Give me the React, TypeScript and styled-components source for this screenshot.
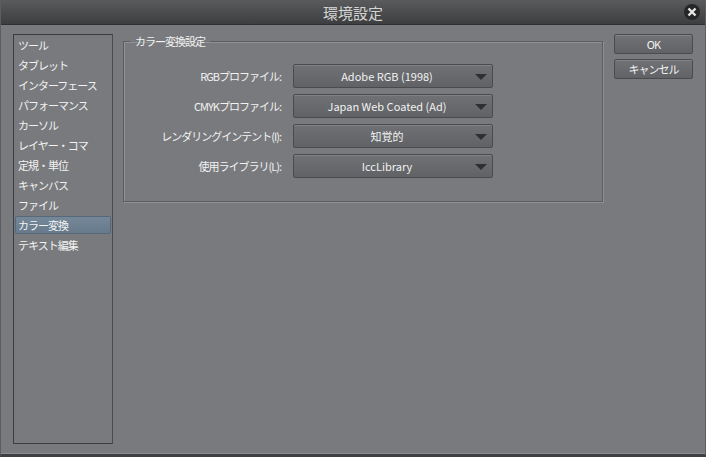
import React from "react";
import styled, { createGlobalStyle } from "styled-components";

const GlobalStyle = createGlobalStyle`
  html, body {
    margin: 0;
    padding: 0;
    background: #77787b;
  }
  body {
    font-family: "Noto Sans CJK JP", "DejaVu Sans", sans-serif;
    font-size: 11px;
    letter-spacing: -1px;
    color: #f2f2f2;
  }
`;

const Window = styled.div`
  width: 706px;
  height: 457px;
  display: flex;
  flex-direction: column;
  background: #797a7d;
  box-sizing: border-box;
  border-left: 1px solid #5c5d60;
  border-right: 1px solid #5c5d60;
  border-bottom: 3px solid #3e3f41;
  overflow: hidden;
`;

const TitleBar = styled.div`
  position: relative;
  height: 25px;
  flex: none;
  display: flex;
  align-items: center;
  justify-content: center;
  background: linear-gradient(#5a5b5d, #3d3e40);
  border-bottom: 1px solid #2e2f31;
  box-sizing: border-box;
  color: #d4d4d4;
  font-size: 15px;
  letter-spacing: 0;
`;

const CloseButton = styled.div`
  position: absolute;
  right: 5px;
  top: 4px;
  width: 16px;
  height: 16px;
  border-radius: 50%;
  background: #262626;
  display: flex;
  align-items: center;
  justify-content: center;
`;

const Body = styled.div`
  flex: 1;
  display: flex;
  align-items: flex-start;
  padding: 9px 0 0 12px;
  gap: 10px;
  border-bottom: 1px solid #8c8d90;
`;

const SideList = styled.div`
  width: 100px;
  height: 410px;
  box-sizing: border-box;
  border: 1px solid #3c3d40;
  border-right-color: #4a4b4e;
  padding: 0 1px;
  display: flex;
  flex-direction: column;
`;

const SideItem = styled.div<{ $selected?: boolean }>`
  height: 18px;
  margin: 1px 0;
  padding-left: 3px;
  line-height: 18px;
  border-radius: 2px;
  white-space: nowrap;
  background: ${p => (p.$selected ? "linear-gradient(#75899a, #66798a)" : "transparent")};
  box-shadow: ${p => (p.$selected ? "inset 0 0 0 1px #586878" : "none")};
`;

const GroupBox = styled.fieldset`
  margin: 0;
  padding: 16px 0 23px 0;
  width: 480px;
  box-sizing: border-box;
  border: 1px solid #5c5d60;
  box-shadow: 1px 1px 0 #8f9093, inset 1px 1px 0 #8f9093;
  display: flex;
  flex-direction: column;
  gap: 6px;
`;

const Legend = styled.legend`
  margin-left: 6px;
  padding: 0 5px;
  line-height: 14px;
  font-size: 11px;
`;

const Row = styled.div`
  display: flex;
  align-items: center;
  gap: 12px;
`;

const Label = styled.div`
  width: 157px;
  text-align: right;
  white-space: nowrap;
`;

const Select = styled.div`
  position: relative;
  width: 200px;
  height: 24px;
  box-sizing: border-box;
  border: 1px solid #4a4b4e;
  border-radius: 2px;
  background: linear-gradient(#6f7174, #606265);
  box-shadow: inset 0 1px 0 #808285;
  display: flex;
  align-items: center;
  justify-content: center;
  padding-right: 12px;
  letter-spacing: 0;
`;

const Arrow = styled.div`
  position: absolute;
  right: 5px;
  top: 9px;
  width: 0;
  height: 0;
  border-left: 6px solid transparent;
  border-right: 6px solid transparent;
  border-top: 6px solid #2e2f31;
`;

const ButtonColumn = styled.div`
  margin-left: 1px;
  display: flex;
  flex-direction: column;
  gap: 5px;
`;

const Button = styled.div`
  width: 79px;
  height: 20px;
  box-sizing: border-box;
  border: 1px solid #4a4b4e;
  border-radius: 2px;
  background: linear-gradient(#707275, #606265);
  box-shadow: inset 0 1px 0 #828487;
  display: flex;
  align-items: center;
  justify-content: center;
  line-height: 1;
`;

const items = [
  "ツール",
  "タブレット",
  "インターフェース",
  "パフォーマンス",
  "カーソル",
  "レイヤー・コマ",
  "定規・単位",
  "キャンバス",
  "ファイル",
  "カラー変換",
  "テキスト編集"
];

const rows = [
  { label: "RGBプロファイル:", value: "Adobe RGB (1998)" },
  { label: "CMYKプロファイル:", value: "Japan Web Coated (Ad)" },
  { label: "レンダリングインテント(I):", value: "知覚的" },
  { label: "使用ライブラリ(L):", value: "IccLibrary" }
];

export default function App() {
  return (
    <>
      <GlobalStyle />
      <Window>
        <TitleBar>
          環境設定
          <CloseButton>
            <svg width="10" height="10" viewBox="0 0 10 10">
              <path d="M1.5 1.5 L8.5 8.5 M8.5 1.5 L1.5 8.5" stroke="#e8e8e8" strokeWidth="2.4" />
            </svg>
          </CloseButton>
        </TitleBar>
        <Body>
          <SideList>
            {items.map(item => (
              <SideItem key={item} $selected={item === "カラー変換"}>
                {item}
              </SideItem>
            ))}
          </SideList>
          <GroupBox>
            <Legend>カラー変換設定</Legend>
            {rows.map(r => (
              <Row key={r.label}>
                <Label>{r.label}</Label>
                <Select>
                  {r.value}
                  <Arrow />
                </Select>
              </Row>
            ))}
          </GroupBox>
          <ButtonColumn>
            <Button>OK</Button>
            <Button>キャンセル</Button>
          </ButtonColumn>
        </Body>
      </Window>
    </>
  );
}
